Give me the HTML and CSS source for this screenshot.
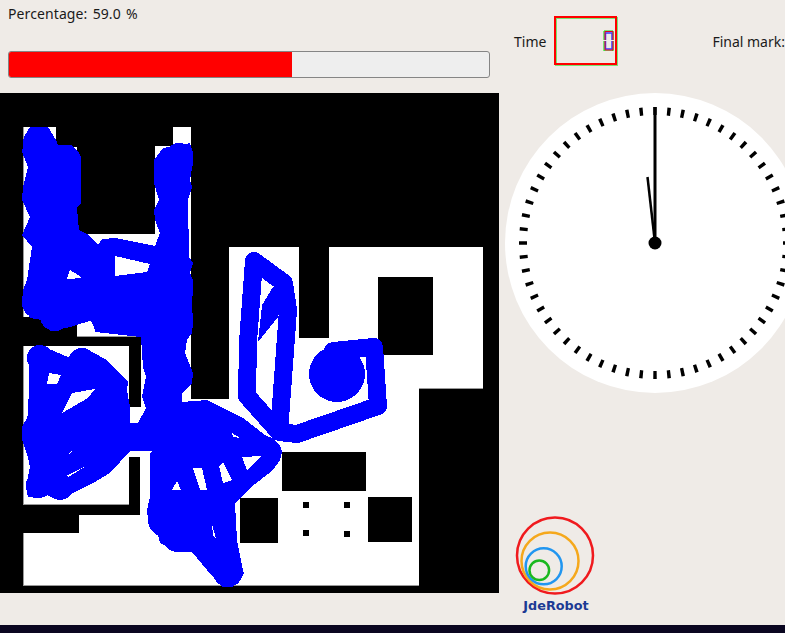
FILE: index.html
```html
<!DOCTYPE html>
<html lang="en">
<head>
    <meta charset="UTF-8">
    <meta name="viewport" content="width=device-width, initial-scale=1.0">
    <title>Vacuum cleaner exercise</title>
    <link rel="stylesheet" href="styles.css">
</head>
<body>

    <div class="page">
        <div class="left-col">
            <div class="percentage">Percentage: 59.0 %</div>
            <div class="progress">
                <div class="progress-fill"></div>
            </div>

            <svg class="map" viewBox="0 93 499 500" width="499" height="500">
                <rect class="wall" x="0" y="93" width="499" height="500"/>
                <path class="floor" d="M23 127H56V147H77V234H155V146H173V127H191V399H229V247H299V338H329V247H483V388H419V585H23V533H79V515H140V457H129V504H23V346H129V407H141V337H77V317H23Z"/>
                <path class="edge" d="M23.5 127V317M23.5 346V504H129M23.5 533V585H419M77 336.5H141M419 388.5H483M378.5 277V355"/>
                <g class="wall">
                    <rect x="378" y="277" width="55" height="78"/>
                    <rect x="282" y="452" width="84" height="39"/>
                    <rect x="240" y="498" width="38" height="45"/>
                    <rect x="368" y="497" width="44" height="45"/>
                    <rect x="303" y="502" width="6" height="6"/>
                    <rect x="344" y="502" width="6" height="6"/>
                    <rect x="303" y="530" width="6" height="6"/>
                    <rect x="344" y="531" width="6" height="6"/>
                </g>

                <!-- area already cleaned -->
                <g class="trail-fill">
                    <circle cx="39" cy="143" r="16"/>
                    <circle cx="67" cy="160" r="14"/>
                    <circle cx="179" cy="157" r="14"/>
                    <circle cx="168" cy="165" r="14"/>
                    <circle cx="37" cy="303" r="15"/>
                    <circle cx="55" cy="316" r="15"/>
                    <circle cx="105" cy="318" r="14"/>
                    <circle cx="228" cy="572" r="15"/>
                    <circle cx="178" cy="535" r="17"/>
                    <circle cx="165" cy="520" r="17"/>
                    <circle cx="39" cy="485" r="13"/>
                    <circle cx="60" cy="487" r="13"/>
                    <circle cx="40" cy="358" r="13"/>
                    <circle cx="36" cy="430" r="14"/>
                    <circle cx="82" cy="362" r="14"/>
                </g>
                <path class="trail-fill" fill-rule="evenodd" d="M25 135L30 127H48L56 140L58 145H72L78 153L81 162V203L77 208L79 230L87 234L98 245L102 239L115 238L155 246L160 233L155 220L154 210L159 200L154 183V160L163 148L180 145L190 143L193 153L193 163L190 180L192 187L188 200L189 257L193 263L190 273L193 280L193 290L192 303L193 323L192 333L187 340L185 353L193 373L192 383L182 393L182 402L207 400L227 410L243 418L265 435L272 438L280 445L282 452L280 460L273 470L250 488L235 503L237 540L243 570L244 573L233 587H222L207 570L192 552H177L160 543L155 523L148 520L147 510L150 497L150 453L153 451H130L110 473L93 483L73 493L58 500L47 495L38 498L28 497L26 487L30 467L28 457L22 440V430L28 415L30 350L38 345L47 348L68 357L80 348L92 352L107 360L128 382L127 390L130 407V423H138L146 408L142 397L146 377L143 367L141 337L95 332L93 320L70 327L50 331L42 320L30 318L22 302L23 290L27 280L32 247L22 235L30 217L22 200L23 187L28 167L22 152Z
                    M115 256V276L147 272L150 264Z
                    M70 270L78 275L82 278L67 279Z
                    M49 373L61 375L57 384L47 384Z
                    M72 393L95 389L88 398L62 413Z
                    M67 455L72 451L71 453Z
                    M58 480L86 466L70 476Z
                    M193 468H202L207 490H200Z
                    M223 462L232 480L223 483L219 466Z
                    M177 481L181 490H172Z
                    M212 524L216 539L213 535Z
                    M232 433L240 438L233 437Z
                    M242 457L262 456L247 470Z"/>
                <polyline class="trail-line" points="254,261 248,342 247,396 279,432"/>
                <polyline class="trail-line" points="254,261 284,283 288,310 279,432"/>
                <polygon class="trail-fill" points="273,287 262,305 258,342 278,317 285,290"/>
                <polyline class="trail-line" points="279,432 297,434 378,406 374,347 333,351"/>
                <circle class="trail-fill" cx="337" cy="374" r="28"/>
            </svg>
        </div>

        <div class="right-col">
            <div class="top-row">
                <span class="time-label">Time</span>
                <div class="lcd">
                    <svg class="lcd-digit" viewBox="0 0 11 21" width="11" height="21">
                        <path class="seg-green" d="M1 10V1H10V10M1 11V21H10V11"/>
                        <path class="seg-blue" d="M2.5 10V3H9V10M2.5 11V19H9V11"/>
                        <path class="seg-red" d="M2 10V1.5H10V10M2 11V20H10V11"/>
                    </svg>
                </div>
                <span class="final-label">Final mark:</span>
            </div>

            <svg class="clock" viewBox="0 0 300 300" width="300" height="300">
                <circle class="clock-face" cx="150" cy="150" r="150"/>
                <circle class="clock-ticks" cx="150" cy="150" r="132" pathLength="60"/>
                <line class="hand" x1="150" y1="150" x2="150" y2="14"/>
                <line class="hand-thin" x1="150" y1="150" x2="142.500" y2="84"/>
                <circle cx="150" cy="150" r="6.5"/>
            </svg>

            <svg class="logo" viewBox="0 0 84 100" width="84" height="100">
                <g class="rings">
                    <circle class="ring-red" cx="40" cy="40.500" r="38"/>
                    <circle class="ring-orange" cx="35" cy="46" r="28.500"/>
                    <circle class="ring-blue" cx="28.700" cy="51.300" r="18"/>
                    <circle class="ring-green" cx="24.300" cy="55.300" r="9.800"/>
                </g>
                <text class="logo-text" x="41" y="95" text-anchor="middle">JdeRobot</text>
            </svg>
        </div>
    </div>

    <div class="bottom-strip"></div>

</body>
</html>
```
FILE: styles.css
```css
html, body {
    margin: 0;
    padding: 0;
}

body {
    font-family: 'Noto Sans', sans-serif;
    font-size: 14px;
    color: #1a1a1a;
    background-color: #efebe7;
    width: 785px;
    height: 633px;
    overflow: hidden;
    display: flex;
    flex-direction: column;
}

.page {
    display: flex;
    flex: 1;
    min-height: 0;
}

.left-col {
    width: 499px;
    flex-shrink: 0;
    display: flex;
    flex-direction: column;
}

.percentage {
    height: 28px;
    line-height: 28px;
    padding-left: 8px;
    letter-spacing: 0.1px;
    word-spacing: 1.5px;
}

.progress {
    margin: 23px 0 15px 8px;
    width: 482px;
    height: 27px;
    box-sizing: border-box;
    border: 1px solid #858585;
    border-radius: 3px;
    background-color: #eeeeee;
    overflow: hidden;
}

.progress-fill {
    width: 283px;
    height: 100%;
    background-color: #ff0000;
}

.map {
    display: block;
    shape-rendering: crispEdges;
}

.wall {
    fill: #000000;
}

.floor {
    fill: #ffffff;
}

.edge {
    fill: none;
    stroke: #999999;
    stroke-width: 1;
}

.trail-fill {
    fill: #0000ff;
}

.trail-line {
    fill: none;
    stroke: #0000ff;
    stroke-width: 18;
    stroke-linecap: round;
    stroke-linejoin: round;
}

.right-col {
    flex: 1;
    min-width: 0;
    display: flex;
    flex-direction: column;
    overflow: hidden;
}

.top-row {
    height: 93px;
    display: flex;
    align-items: flex-start;
    padding: 16px 0 0 15px;
    box-sizing: border-box;
    white-space: nowrap;
}

.time-label {
    line-height: 51px;
}

.lcd {
    width: 63px;
    height: 49px;
    box-sizing: border-box;
    margin-left: 8px;
    border: 2px solid #ff0000;
    box-shadow: 1px 1px 0 rgba(0, 224, 0, 0.5), inset 1px 1px 0 rgba(0, 224, 0, 0.5);
    display: flex;
    justify-content: flex-end;
    align-items: center;
    padding-right: 1px;
}

.lcd-digit {
    display: block;
    fill: none;
    stroke-width: 1;
}

.seg-green {
    stroke: #00e000;
}

.seg-blue {
    stroke: #3a3aff;
    stroke-width: 1.5;
}

.seg-red {
    stroke: #e00020;
}

.final-label {
    margin-left: 95px;
    line-height: 51px;
}

.clock {
    display: block;
    margin-left: 6px;
    flex-shrink: 0;
}

.clock-face {
    fill: #ffffff;
}

.clock-ticks {
    fill: none;
    stroke: #000000;
    stroke-width: 8;
    stroke-dasharray: 0.25 0.75;
    stroke-dashoffset: 0.125;
}

.hand {
    stroke: #000000;
    stroke-width: 3;
}

.hand-thin {
    stroke: #000000;
    stroke-width: 2.5;
}

.logo {
    display: block;
    margin: 122px 0 0 16px;
    flex-shrink: 0;
}

.rings {
    fill: none;
    stroke-width: 2.5;
}

.ring-red {
    stroke: #f01a1e;
}

.ring-orange {
    stroke: #f5a81c;
}

.ring-blue {
    stroke: #2196f0;
}

.ring-green {
    stroke: #19b81e;
}

.logo-text {
    font-family: 'DejaVu Sans', sans-serif;
    font-weight: bold;
    font-size: 12.8px;
    fill: #1c3a94;
}

.bottom-strip {
    height: 8px;
    flex-shrink: 0;
    background-color: #0a0620;
}
```
